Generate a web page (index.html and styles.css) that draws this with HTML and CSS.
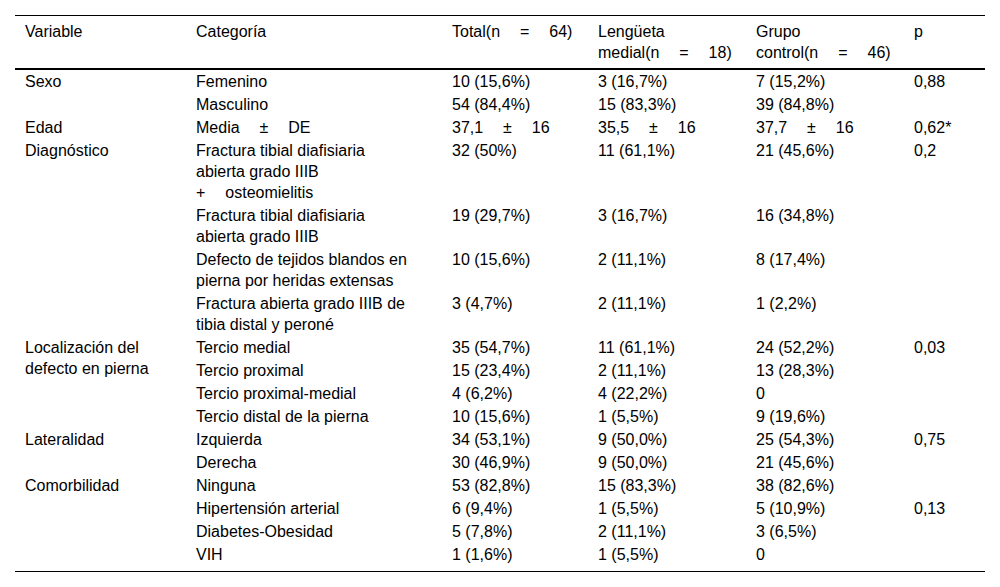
FILE: index.html
```html
<!DOCTYPE html>
<html lang="es">
<head>
<meta charset="utf-8">
<title>Tabla</title>
<link rel="stylesheet" href="styles.css">
</head>
<body>
<table class="data">
  <colgroup>
    <col class="c1"><col class="c2"><col class="c3"><col class="c4"><col class="c5"><col class="c6">
  </colgroup>
  <thead>
    <tr>
      <th>Variable</th>
      <th class="cat">Categoría</th>
      <th><span class="nb">Total(n = 64)</span></th>
      <th>Lengüeta <span class="nb">medial(n = 18)</span></th>
      <th>Grupo <span class="nb">control(n = 46)</span></th>
      <th>p</th>
    </tr>
  </thead>
  <tbody>
    <tr><td rowspan="2">Sexo</td><td class="cat">Femenino</td><td>10 (15,6%)</td><td>3 (16,7%)</td><td>7 (15,2%)</td><td>0,88</td></tr>
    <tr><td class="cat">Masculino</td><td>54 (84,4%)</td><td>15 (83,3%)</td><td>39 (84,8%)</td><td></td></tr>
    <tr><td>Edad</td><td class="cat"><span class="nb">Media ± DE</span></td><td><span class="nb">37,1 ± 16</span></td><td><span class="nb">35,5 ± 16</span></td><td><span class="nb">37,7 ± 16</span></td><td>0,62*</td></tr>
    <tr><td rowspan="4">Diagnóstico</td><td class="cat">Fractura tibial diafisiaria abierta grado IIIB <span class="nb">+ osteomielitis</span></td><td>32 (50%)</td><td>11 (61,1%)</td><td>21 (45,6%)</td><td>0,2</td></tr>
    <tr><td class="cat">Fractura tibial diafisiaria abierta grado IIIB</td><td>19 (29,7%)</td><td>3 (16,7%)</td><td>16 (34,8%)</td><td></td></tr>
    <tr><td class="cat">Defecto de tejidos blandos en pierna por heridas extensas</td><td>10 (15,6%)</td><td>2 (11,1%)</td><td>8 (17,4%)</td><td></td></tr>
    <tr><td class="cat">Fractura abierta grado IIIB de tibia distal y peroné</td><td>3 (4,7%)</td><td>2 (11,1%)</td><td>1 (2,2%)</td><td></td></tr>
    <tr><td rowspan="4">Localización del defecto en pierna</td><td class="cat">Tercio medial</td><td>35 (54,7%)</td><td>11 (61,1%)</td><td>24 (52,2%)</td><td>0,03</td></tr>
    <tr><td class="cat">Tercio proximal</td><td>15 (23,4%)</td><td>2 (11,1%)</td><td>13 (28,3%)</td><td></td></tr>
    <tr><td class="cat">Tercio proximal-medial</td><td>4 (6,2%)</td><td>4 (22,2%)</td><td>0</td><td></td></tr>
    <tr><td class="cat">Tercio distal de la pierna</td><td>10 (15,6%)</td><td>1 (5,5%)</td><td>9 (19,6%)</td><td></td></tr>
    <tr><td rowspan="2">Lateralidad</td><td class="cat">Izquierda</td><td>34 (53,1%)</td><td>9 (50,0%)</td><td>25 (54,3%)</td><td>0,75</td></tr>
    <tr><td class="cat">Derecha</td><td>30 (46,9%)</td><td>9 (50,0%)</td><td>21 (45,6%)</td><td></td></tr>
    <tr><td rowspan="4" class="last">Comorbilidad</td><td class="cat">Ninguna</td><td>53 (82,8%)</td><td>15 (83,3%)</td><td>38 (82,6%)</td><td></td></tr>
    <tr><td class="cat">Hipertensión arterial</td><td>6 (9,4%)</td><td>1 (5,5%)</td><td>5 (10,9%)</td><td>0,13</td></tr>
    <tr><td class="cat">Diabetes-Obesidad</td><td>5 (7,8%)</td><td>2 (11,1%)</td><td>3 (6,5%)</td><td></td></tr>
    <tr class="last"><td class="cat">VIH</td><td>1 (1,6%)</td><td>1 (5,5%)</td><td>0</td><td></td></tr>
  </tbody>
</table>
</body>
</html>
```
FILE: styles.css
```css
html, body {
  margin: 0;
  padding: 0;
  background: #fff;
}
body {
  font-family: "Liberation Sans", Arial, sans-serif;
  font-size: 16px;
  line-height: 21px;
  color: #000;
}
.data {
  margin: 15px 0 0 15px;
  width: 970px;
  table-layout: fixed;
  border-collapse: separate;
  border-spacing: 0;
  border-top: 1px solid #000;
  border-bottom: 1px solid #000;
}
.c1 { width: 171px; }
.c2 { width: 256px; }
.c3 { width: 146px; }
.c4 { width: 158px; }
.c5 { width: 158px; }
.c6 { width: 81px; }
.data th,
.data td {
  text-align: left;
  vertical-align: top;
  font-weight: normal;
  padding: 1px 10px 1px 10px;
}
.data th {
  padding-top: 5px;
  padding-bottom: 5px;
  border-bottom: 2px solid #000;
}
.data .cat {
  padding-right: 30px;
}
.data tr.last td,
.data td.last {
  padding-bottom: 6px;
}
.nb {
  white-space: nowrap;
  word-spacing: 15.5px;
}
```
